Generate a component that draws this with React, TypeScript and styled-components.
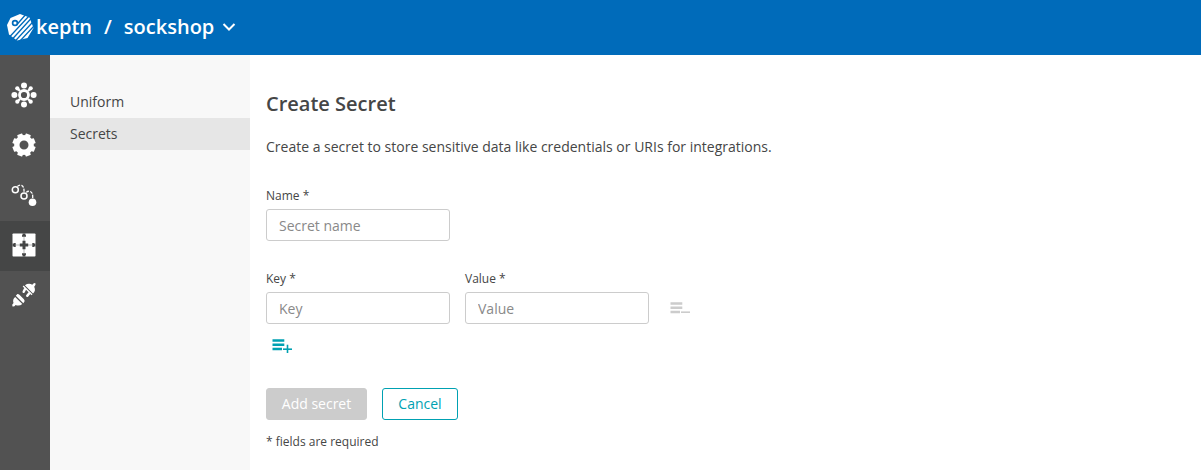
import React from "react";
import styled, { createGlobalStyle, css } from "styled-components";

const GlobalStyle = createGlobalStyle`
  * { box-sizing: border-box; }
  body { margin: 0; background: #fff; color: #454646; font: 14px/20px "Open Sans", sans-serif; }
  h1, p { margin: 0; }
`;

const Page = styled.div`
  display: flex;
  flex-direction: column;
  height: 470px;
  overflow: hidden;
`;

const Header = styled.header`
  display: flex;
  align-items: center;
  flex: 0 0 55px;
  padding: 0 0 1px 7px;
  background: #006bba;
  color: #fff;
  font-size: 20px;
  font-weight: 600;
  line-height: 28px;
`;

const Brand = styled.span`
  margin-left: 2px;
`;

const Separator = styled.span`
  margin: 0 12px 0 12px;
`;

const Chevron = styled.svg`
  margin-left: 8px;
`;

const Body = styled.div`
  display: flex;
  flex: 1;
`;

const Rail = styled.nav`
  flex: 0 0 50px;
  padding-top: 16px;
  background: #525252;
`;

const RailItem = styled.a<{ $active?: boolean }>`
  display: flex;
  align-items: center;
  justify-content: center;
  height: 50px;
  padding: 0 2px 2px 0;
  ${(p) => p.$active && css`background: #454646;`}
`;

const SubMenu = styled.nav`
  flex: 0 0 200px;
  padding-top: 31px;
  background: #f8f8f8;
`;

const SubItem = styled.a<{ $active?: boolean }>`
  display: block;
  height: 32px;
  padding-left: 20px;
  line-height: 32px;
  background: ${(p) => (p.$active ? "#e6e6e6" : "transparent")};
`;

const Content = styled.main`
  flex: 1;
  padding: 35px 16px 0;
`;

const Title = styled.h1`
  font-size: 20px;
  font-weight: 600;
  line-height: 28px;
`;

const Intro = styled.p`
  margin-top: 19px;
`;

const FormRow = styled.div<{ $top: number }>`
  display: flex;
  align-items: flex-end;
  gap: 15px;
  margin-top: ${(p) => p.$top}px;
`;

const Field = styled.label`
  display: flex;
  flex-direction: column;
  width: 184px;
  font-size: 12px;
  line-height: 20px;
`;

const Input = styled.input`
  height: 32px;
  margin-top: 3px;
  padding: 0 12px;
  border: 1px solid #ccc;
  border-radius: 3px;
  font: 14px/20px "Open Sans", sans-serif;
  &::placeholder { color: #898989; opacity: 1; }
`;

const IconButton = styled.button<{ $color: string }>`
  display: flex;
  align-items: center;
  justify-content: center;
  width: 32px;
  height: 32px;
  padding: 0;
  border: 0;
  background: none;
  color: ${(p) => p.$color};
`;

const AddRow = styled.div`
  margin-top: 5px;
`;

const Button = styled.button<{ $primary?: boolean }>`
  height: 32px;
  width: ${(p) => (p.$primary ? 101 : 76)}px;
  padding: 0;
  border: 1px solid ${(p) => (p.$primary ? "#ccc" : "#00a1b2")};
  border-radius: 3px;
  background: ${(p) => (p.$primary ? "#ccc" : "#fff")};
  color: ${(p) => (p.$primary ? "#fff" : "#00a1b2")};
  font: 14px/20px "Open Sans", sans-serif;
`;

const Note = styled.p`
  margin-top: 12px;
  font-size: 12px;
`;

const Logo = () => (
  <svg width="27" height="27" viewBox="0 0 27 27">
    <path d="M13 0 22.5 3.5 26.5 14 20.5 24 10 26.5 2 20.5 0 11 3.5 4Z" fill="#fff" />
    <g stroke="#006bba" strokeWidth="1.3" fill="none">
      <path d="M10.2 10.2 18.5 .8M2 23.5 22.5 1.5M5 25.5 25 3.5M8.3 27 27 6.8M13 27 27.5 11.5" />
      <circle cx="8" cy="9" r="2.4" strokeWidth="1.7" />
    </g>
  </svg>
);

const Rotor = () => (
  <svg width="26" height="26" viewBox="-13 -13 26 26" fill="#fff">
    <circle r="4.5" fill="none" stroke="#fff" strokeWidth="2.8" />
    <path d="M-7-7-4-4M7-7 4-4M-7 7-4 4M7 7 4 4" stroke="#fff" strokeWidth="2.4" />
    {[0, 90, 180, 270].map((a) => (
      <g key={a} transform={`rotate(${a})`}>
        <circle cy="-9.6" r="3" />
        <circle cx="6.7" cy="-6.7" r="2.1" />
      </g>
    ))}
  </svg>
);

const Gear = () => (
  <svg width="26" height="26" viewBox="-13 -13 26 26">
    <circle r="7.2" fill="none" stroke="#fff" strokeWidth="5.4" />
    <g fill="#fff">
      {[0, 45, 90, 135, 180, 225, 270, 315].map((a) => (
        <rect key={a} x="-2.7" y="-11.6" width="5.4" height="4" rx=".6" transform={`rotate(${a + 22.5})`} />
      ))}
    </g>
  </svg>
);

const Sequence = () => (
  <svg width="26" height="26" viewBox="0 0 26 26" fill="none" stroke="#fff">
    <circle cx="4.3" cy="7.7" r="3" strokeWidth="1.5" />
    <circle cx="13" cy="14" r="3" strokeWidth="1.5" />
    <circle cx="21.5" cy="20.2" r="3.8" fill="#fff" stroke="none" />
    <path d="M6.4 4.4Q8.5 2.6 10.6 3.4Q13.3 4.5 13 10M15.2 10.4Q17 8.7 19.3 9.5Q22 10.5 21.7 16" strokeWidth="1.3" strokeDasharray="3 1.3" />
  </svg>
);

const Puzzle = () => (
  <svg width="26" height="26" viewBox="-13 -13 26 26">
    <rect x="-11.5" y="-11.5" width="23" height="23" rx=".8" fill="#fff" />
    <g fill="#454646">
      <path d="M-1.4-11.5H1.4V-10.4L2-9.6V-8.3H-2V-9.6L-1.4-10.4ZM-1.4 11.5H1.4V10.4L2 9.6V8.3H-2V9.6L-1.4 10.4Z" />
      <path d="M-11.5-1.4V1.4H-10.4L-9.6 2H-8.3V-2H-9.6L-10.4-1.4ZM11.5-1.4V1.4H10.4L9.6 2H8.3V-2H9.6L10.4-1.4Z" />
      <path d="M-4.2-1.5H-1.5V-4.2H1.5V-1.5H4.2V1.5H1.5V4.2H-1.5V1.5H-4.2Z" />
    </g>
    <path stroke="#454646" strokeWidth=".4" d="M0-8.5V8.5M-8.5 0H8.5" />
  </svg>
);

const Plug = () => (
  <svg width="26" height="26" viewBox="0 0 26 26" fill="#fff" stroke="#fff">
    <path stroke="none" d="M13.9 3.2Q17.8.7 21.3 2.8Q22.5.8 24.3 1.1Q25.3 2.8 23.2 4.7Q25.2 8.7 22 11.5Z" />
    <path strokeWidth="1.4" d="M12.2 4 21 12.7" />
    <path strokeWidth="2.5" strokeLinecap="round" d="M13.9 7.2 12.7 9.8M18.3 11.2 16.3 13.8" />
    <path stroke="none" d="M4.2 14.9 11.3 22Q8.2 24.5 4.6 22.9Q3.3 25 1.5 24.5Q.4 22.7 2.5 21Q1.2 17.4 4.2 14.9Z" />
    <path stroke="none" d="M4.8 13.7 6.4 12Q7.5 11.9 8.4 12.8L12.7 17.1Q13.9 18.4 13.5 19.6L12.3 21.2Z" />
  </svg>
);

const ListIcon = ({ plus }: { plus?: boolean }) => (
  <svg width="20" height="16" viewBox="0 0 20 16" fill="currentColor">
    <path d="M.5 2.2H12.3V4.7H.5ZM.5 6.4H12.3V8.9H.5ZM.5 10.8H10V13.3H.5Z" />
    <path d="M11 11.4H20V13H11Z" />
    {plus && <path d="M14.7 7.7H16.3V16H14.7Z" />}
  </svg>
);

export default function App() {
  return (
    <Page>
      <GlobalStyle />
      <Header>
        <Logo />
        <Brand>keptn</Brand>
        <Separator>/</Separator>
        <span>sockshop</span>
        <Chevron width="14" height="10" viewBox="0 0 14 10" fill="none" stroke="#fff" strokeWidth="2">
          <path d="M1.5 2 7 7.5 12.5 2" />
        </Chevron>
      </Header>
      <Body>
        <Rail>
          <RailItem><Rotor /></RailItem>
          <RailItem><Gear /></RailItem>
          <RailItem><Sequence /></RailItem>
          <RailItem $active><Puzzle /></RailItem>
          <RailItem><Plug /></RailItem>
        </Rail>
        <SubMenu>
          <SubItem>Uniform</SubItem>
          <SubItem $active>Secrets</SubItem>
        </SubMenu>
        <Content>
          <Title>Create Secret</Title>
          <Intro>Create a secret to store sensitive data like credentials or URIs for integrations.</Intro>
          <FormRow $top={29}>
            <Field>Name *<Input placeholder="Secret name" /></Field>
          </FormRow>
          <FormRow $top={28}>
            <Field>Key *<Input placeholder="Key" /></Field>
            <Field>Value *<Input placeholder="Value" /></Field>
            <IconButton $color="#ccc"><ListIcon /></IconButton>
          </FormRow>
          <AddRow>
            <IconButton $color="#00a1b2"><ListIcon plus /></IconButton>
          </AddRow>
          <FormRow $top={27}>
            <Button $primary>Add secret</Button>
            <Button>Cancel</Button>
          </FormRow>
          <Note>* fields are required</Note>
        </Content>
      </Body>
    </Page>
  );
}
